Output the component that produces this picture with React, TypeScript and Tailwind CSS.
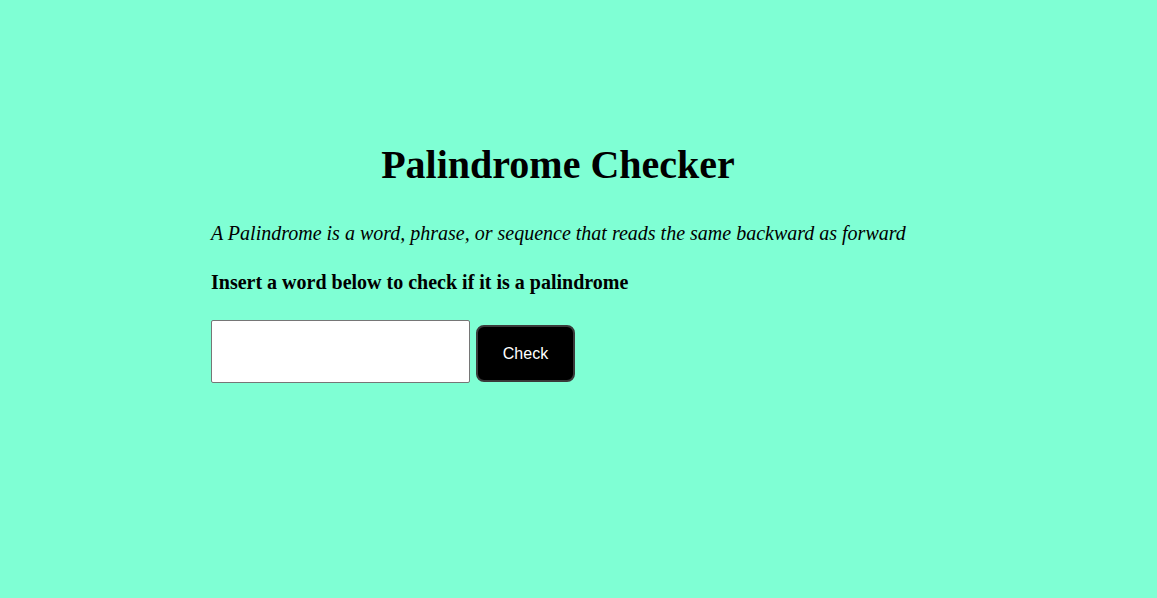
export default function App() {
  return (
    <div className="min-h-[598px] w-full bg-[#7fffd4] font-['Liberation_Serif',serif] text-black">
      <div className="ml-[211px] w-[694px] pt-[141px]">
        <h1 className="text-center text-[40px] font-bold leading-[48px]">Palindrome Checker</h1>
        <p className="mt-[32px] whitespace-nowrap text-[20px] italic leading-[24px]">
          A Palindrome is a word, phrase, or sequence that reads the same backward as forward
        </p>
        <p className="mt-[25px] text-[20px] font-bold leading-[24px]">
          Insert a word below to check if it is a palindrome
        </p>
        <div className="mt-[26px] flex items-end gap-[6px]">
          <input
            type="text"
            className="h-[63px] w-[259px] rounded-[2px] border border-[#767676] bg-white px-2"
          />
          <button className="mb-[1px] h-[57px] w-[99px] rounded-[8px] border-2 border-[#3a3a3a] bg-black font-['Liberation_Sans',sans-serif] text-[16px] text-white">
            Check
          </button>
        </div>
      </div>
    </div>
  );
}
